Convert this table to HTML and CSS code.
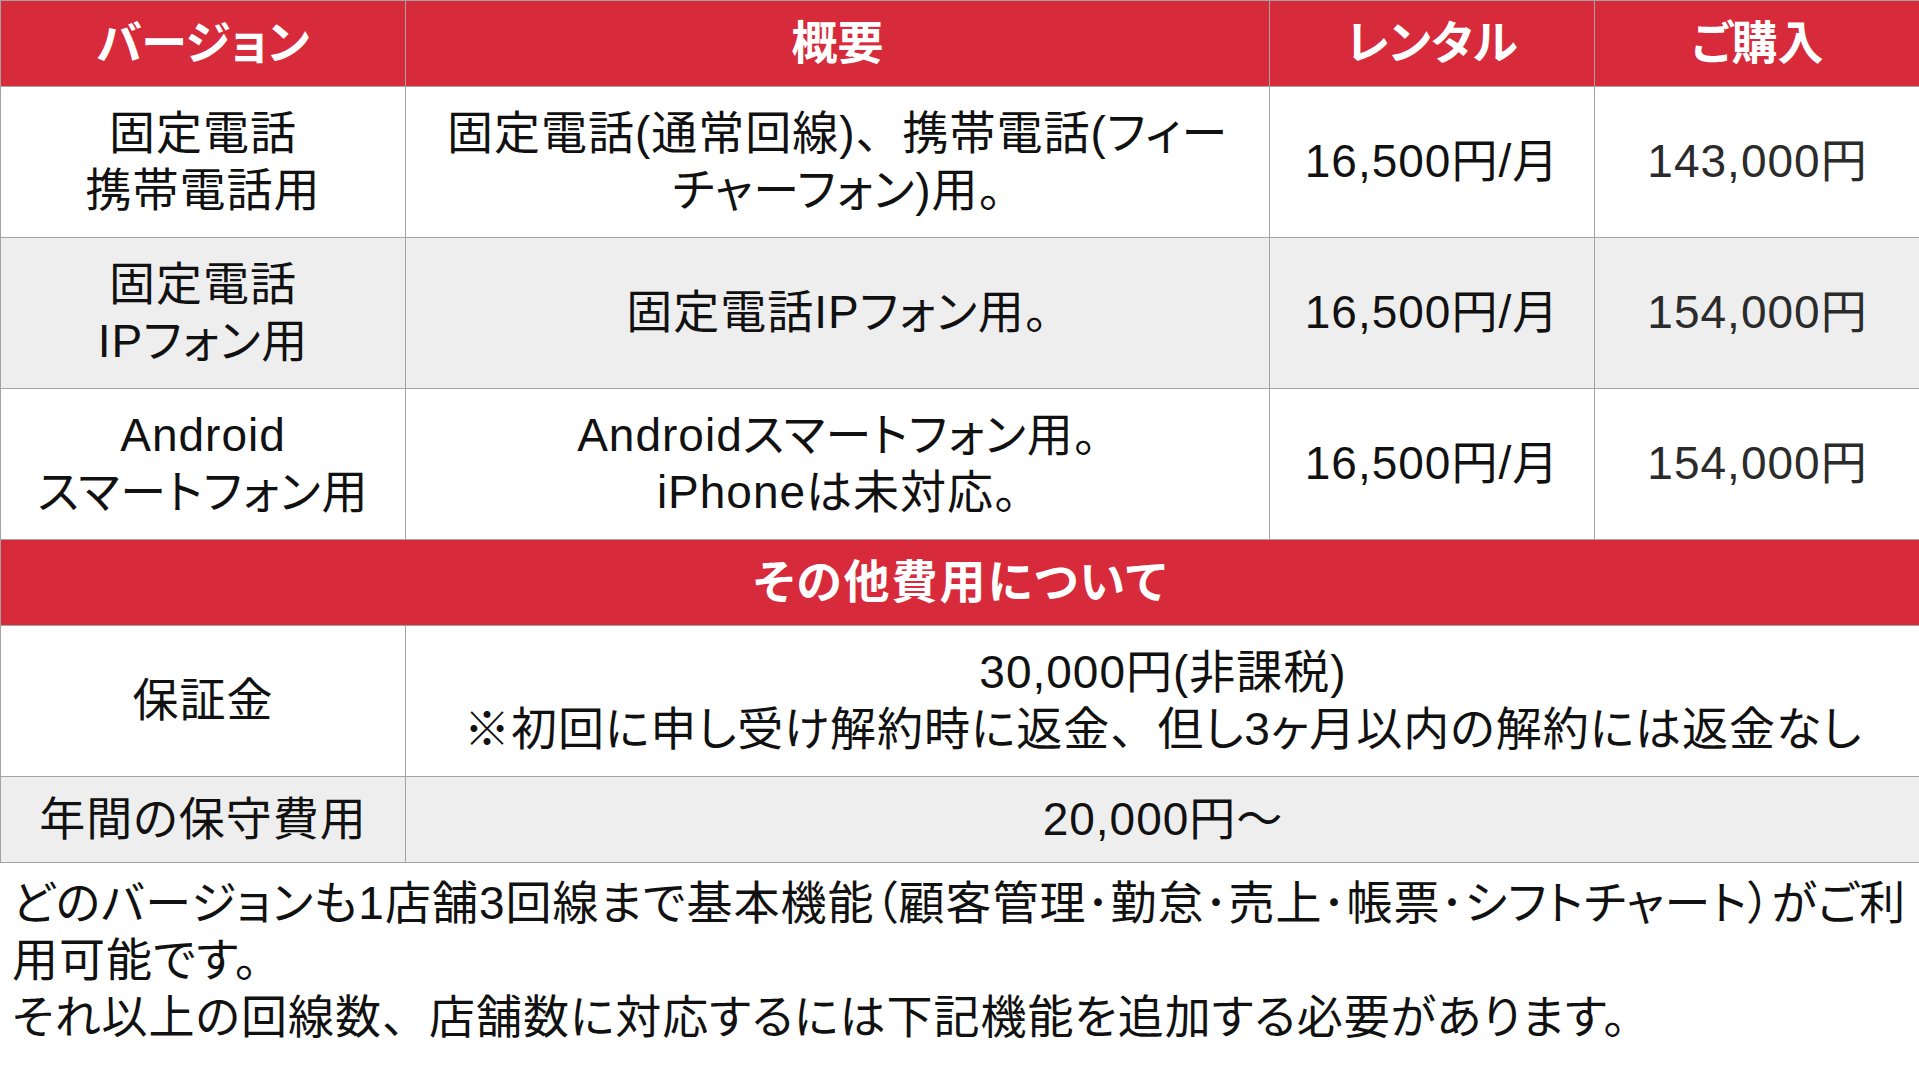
FILE: index.html
```html
<!DOCTYPE html>
<html lang="ja">
<head>
<meta charset="utf-8">
<title>料金表</title>
<link rel="stylesheet" href="styles.css">
</head>
<body>
<table class="price">
  <colgroup>
    <col class="c-ver"><col class="c-desc"><col class="c-rent"><col class="c-buy">
  </colgroup>
  <thead>
    <tr class="head">
      <th>バージョン</th><th>概要</th><th>レンタル</th><th>ご購入</th>
    </tr>
  </thead>
  <tbody>
    <tr class="row">
      <td>固定電話<br>携帯電話用</td>
      <td>固定電話(通常回線)<span class="fw">、</span>携帯電話(フィー<br>チャーフォン)用。</td>
      <td>16,500円/月</td>
      <td class="buy">143,000円</td>
    </tr>
    <tr class="row alt">
      <td>固定電話<br>IPフォン用</td>
      <td>固定電話IPフォン用。</td>
      <td>16,500円/月</td>
      <td class="buy">154,000円</td>
    </tr>
    <tr class="row">
      <td>Android<br>スマートフォン用</td>
      <td>Androidスマートフォン用。<br>iPhoneは未対応。</td>
      <td>16,500円/月</td>
      <td class="buy">154,000円</td>
    </tr>
    <tr class="section">
      <th colspan="4">その他費用について</th>
    </tr>
    <tr class="row">
      <td>保証金</td>
      <td colspan="3">30,000円(非課税)<br>※初回に申し受け解約時に返金<span class="fw">、</span>但し3ヶ月以内の解約には返金なし</td>
    </tr>
    <tr class="short alt">
      <td>年間の保守費用</td>
      <td colspan="3">20,000円～</td>
    </tr>
  </tbody>
</table>
<div class="note">
  <p>どのバージョンも1店舗3回線まで基本機能（顧客管理･勤怠･売上･帳票･シフトチャート）がご利</p>
  <p>用可能です。</p>
  <p>それ以上の回線数<span class="fw">、</span>店舗数に対応するには下記機能を追加する必要があります。</p>
</div>
</body>
</html>
```

FILE: styles.css
```css
html, body {
  margin: 0;
  padding: 0;
  background: #ffffff;
  overflow: hidden;
}
body {
  width: 1919px;
  height: 1080px;
  font-family: "Liberation Sans", "Noto Sans CJK JP", sans-serif;
  font-size: 46px;
  line-height: 1.25;
  color: #111111;
  font-feature-settings: "palt";
  letter-spacing: 1px;
}
.fw {
  font-feature-settings: normal;
}
.price {
  width: 1920px;
  border-collapse: collapse;
  table-layout: fixed;
}
.c-ver { width: 405px; }
.c-desc { width: 864px; }
.c-rent { width: 325px; }
.c-buy { width: 326px; }
.price th,
.price td {
  border: 1px solid #a3a3a3;
  padding: 0;
  text-align: center;
  vertical-align: middle;
}
.head th {
  height: 85px;
  background: #d72a3b;
  color: #ffffff;
  font-weight: 700;
  font-size: 46px;
  letter-spacing: 0;
}
.row td {
  height: 150px;
  background: #ffffff;
}
.row.alt td,
.short.alt td {
  background: #eeeeee;
}
.short td {
  height: 85px;
}
.buy {
  color: #2b2b2b;
}
.section th {
  height: 85px;
  background: #d72a3b;
  color: #ffffff;
  font-weight: 700;
  font-size: 46px;
  letter-spacing: 2px;
}
.note {
  padding: 12px 0 0 12px;
}
.note p {
  margin: 0;
  white-space: nowrap;
  line-height: 57px;
}
```
